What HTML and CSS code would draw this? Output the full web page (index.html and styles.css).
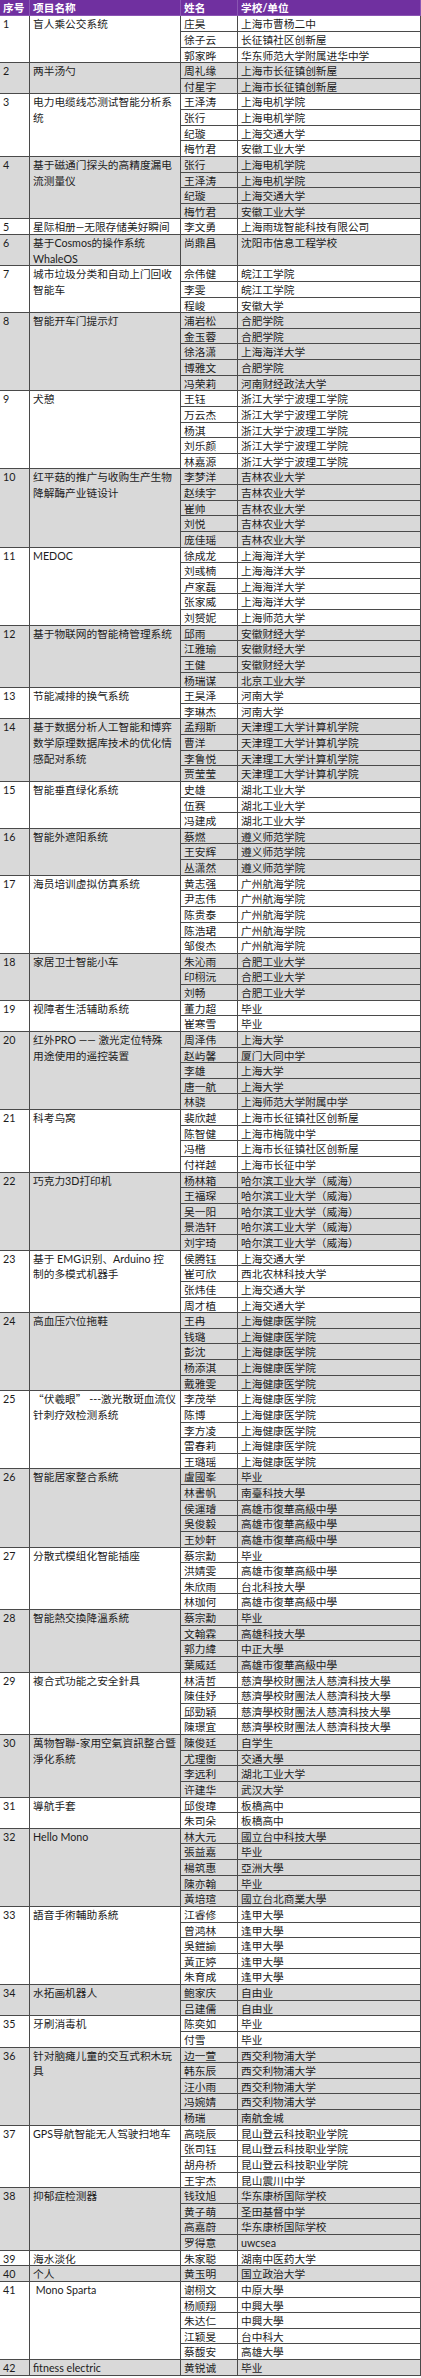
FILE: index.html
```html
<!DOCTYPE html>
<html lang="zh-CN">
<head>
<meta charset="utf-8">
<title>项目名单</title>
<link rel="stylesheet" href="styles.css">
</head>
<body>
<div class="sheet">
  <div class="c h">序号</div><div class="c h">项目名称</div><div class="c h">姓名</div><div class="c h">学校/单位</div>

  <div class="grp">
    <div class="c n s3">1</div><div class="c p s3">盲人乘公交系统</div>
    <div class="c">庄昊</div><div class="c">上海市曹杨二中</div>
    <div class="c">徐子云</div><div class="c">长征镇社区创新屋</div>
    <div class="c">郭家晔</div><div class="c">华东师范大学附属进华中学</div>
  </div>
  <div class="grp g">
    <div class="c n s2">2</div><div class="c p s2">两半汤勺</div>
    <div class="c">周礼缘</div><div class="c">上海市长征镇创新屋</div>
    <div class="c">付星宇</div><div class="c">上海市长征镇创新屋</div>
  </div>
  <div class="grp">
    <div class="c n s4">3</div><div class="c p s4">电力电缆线芯测试智能分析系<br>统</div>
    <div class="c">王泽涛</div><div class="c">上海电机学院</div>
    <div class="c">张行</div><div class="c">上海电机学院</div>
    <div class="c">纪璇</div><div class="c">上海交通大学</div>
    <div class="c">梅竹君</div><div class="c">安徽工业大学</div>
  </div>
  <div class="grp g">
    <div class="c n s4">4</div><div class="c p s4">基于磁通门探头的高精度漏电<br>流测量仪</div>
    <div class="c">张行</div><div class="c">上海电机学院</div>
    <div class="c">王泽涛</div><div class="c">上海电机学院</div>
    <div class="c">纪璇</div><div class="c">上海交通大学</div>
    <div class="c">梅竹君</div><div class="c">安徽工业大学</div>
  </div>
  <div class="grp">
    <div class="c n">5</div><div class="c p">星际相册—无限存储美好瞬间</div>
    <div class="c">李文勇</div><div class="c">上海雨珑智能科技有限公司</div>
  </div>
  <div class="grp g">
    <div class="c n s2">6</div><div class="c p s2">基于Cosmos的操作系统<br>WhaleOS</div>
    <div class="c s2">尚鼎昌</div><div class="c s2">沈阳市信息工程学校</div>
  </div>
  <div class="grp">
    <div class="c n s3">7</div><div class="c p s3">城市垃圾分类和自动上门回收<br>智能车</div>
    <div class="c">佘伟健</div><div class="c">皖江工学院</div>
    <div class="c">李雯</div><div class="c">皖江工学院</div>
    <div class="c">程峻</div><div class="c">安徽大学</div>
  </div>
  <div class="grp g">
    <div class="c n s5">8</div><div class="c p s5">智能开车门提示灯</div>
    <div class="c">浦岩松</div><div class="c">合肥学院</div>
    <div class="c">金玉蓉</div><div class="c">合肥学院</div>
    <div class="c">徐洛潇</div><div class="c">上海海洋大学</div>
    <div class="c">博雅文</div><div class="c">合肥学院</div>
    <div class="c">冯荣莉</div><div class="c">河南财经政法大学</div>
  </div>
  <div class="grp">
    <div class="c n s5">9</div><div class="c p s5">犬憩</div>
    <div class="c">王钰</div><div class="c">浙江大学宁波理工学院</div>
    <div class="c">万云杰</div><div class="c">浙江大学宁波理工学院</div>
    <div class="c">杨淇</div><div class="c">浙江大学宁波理工学院</div>
    <div class="c">刘乐颜</div><div class="c">浙江大学宁波理工学院</div>
    <div class="c">林嘉源</div><div class="c">浙江大学宁波理工学院</div>
  </div>
  <div class="grp g">
    <div class="c n s5">10</div><div class="c p s5">红平菇的推广与收购生产生物<br>降解酶产业链设计</div>
    <div class="c">李梦洋</div><div class="c">吉林农业大学</div>
    <div class="c">赵续宇</div><div class="c">吉林农业大学</div>
    <div class="c">崔帅</div><div class="c">吉林农业大学</div>
    <div class="c">刘悦</div><div class="c">吉林农业大学</div>
    <div class="c">庞佳瑶</div><div class="c">吉林农业大学</div>
  </div>
  <div class="grp">
    <div class="c n s5">11</div><div class="c p s5">MEDOC</div>
    <div class="c">徐成龙</div><div class="c">上海海洋大学</div>
    <div class="c">刘彧楠</div><div class="c">上海海洋大学</div>
    <div class="c">卢家磊</div><div class="c">上海海洋大学</div>
    <div class="c">张家威</div><div class="c">上海海洋大学</div>
    <div class="c">刘赟妮</div><div class="c">上海师范大学</div>
  </div>
  <div class="grp g">
    <div class="c n s4">12</div><div class="c p s4">基于物联网的智能椅管理系统</div>
    <div class="c">邱雨</div><div class="c">安徽财经大学</div>
    <div class="c">江雅瑜</div><div class="c">安徽财经大学</div>
    <div class="c">王健</div><div class="c">安徽财经大学</div>
    <div class="c">杨瑞谋</div><div class="c">北京工业大学</div>
  </div>
  <div class="grp">
    <div class="c n s2">13</div><div class="c p s2">节能减排的换气系统</div>
    <div class="c">王昊泽</div><div class="c">河南大学</div>
    <div class="c">李琳杰</div><div class="c">河南大学</div>
  </div>
  <div class="grp g">
    <div class="c n s4">14</div><div class="c p s4">基于数据分析人工智能和博弈<br>数学原理数据库技术的优化情<br>感配对系统</div>
    <div class="c">孟翔斯</div><div class="c">天津理工大学计算机学院</div>
    <div class="c">曹洋</div><div class="c">天津理工大学计算机学院</div>
    <div class="c">李鲁悦</div><div class="c">天津理工大学计算机学院</div>
    <div class="c">贾莹莹</div><div class="c">天津理工大学计算机学院</div>
  </div>
  <div class="grp">
    <div class="c n s3">15</div><div class="c p s3">智能垂直绿化系统</div>
    <div class="c">史雄</div><div class="c">湖北工业大学</div>
    <div class="c">伍赛</div><div class="c">湖北工业大学</div>
    <div class="c">冯建成</div><div class="c">湖北工业大学</div>
  </div>
  <div class="grp g">
    <div class="c n s3">16</div><div class="c p s3">智能外遮阳系统</div>
    <div class="c">蔡燃</div><div class="c">遵义师范学院</div>
    <div class="c">王安辉</div><div class="c">遵义师范学院</div>
    <div class="c">丛潇然</div><div class="c">遵义师范学院</div>
  </div>
  <div class="grp">
    <div class="c n s5">17</div><div class="c p s5">海员培训虚拟仿真系统</div>
    <div class="c">黄志强</div><div class="c">广州航海学院</div>
    <div class="c">尹志伟</div><div class="c">广州航海学院</div>
    <div class="c">陈贵泰</div><div class="c">广州航海学院</div>
    <div class="c">陈浩珺</div><div class="c">广州航海学院</div>
    <div class="c">邹俊杰</div><div class="c">广州航海学院</div>
  </div>
  <div class="grp g">
    <div class="c n s3">18</div><div class="c p s3">家居卫士智能小车</div>
    <div class="c">朱沁雨</div><div class="c">合肥工业大学</div>
    <div class="c">印栩沅</div><div class="c">合肥工业大学</div>
    <div class="c">刘畅</div><div class="c">合肥工业大学</div>
  </div>
  <div class="grp">
    <div class="c n s2">19</div><div class="c p s2">视障者生活辅助系统</div>
    <div class="c">董力超</div><div class="c">毕业</div>
    <div class="c">崔寒雪</div><div class="c">毕业</div>
  </div>
  <div class="grp g">
    <div class="c n s5">20</div><div class="c p s5">红外PRO —— 激光定位特殊<br>用途使用的遥控装置</div>
    <div class="c">周泽伟</div><div class="c">上海大学</div>
    <div class="c">赵屿馨</div><div class="c">厦门大同中学</div>
    <div class="c">李雄</div><div class="c">上海大学</div>
    <div class="c">唐一航</div><div class="c">上海大学</div>
    <div class="c">林骁</div><div class="c">上海师范大学附属中学</div>
  </div>
  <div class="grp">
    <div class="c n s4">21</div><div class="c p s4">科考鸟窝</div>
    <div class="c">裴欣越</div><div class="c">上海市长征镇社区创新屋</div>
    <div class="c">陈智健</div><div class="c">上海市梅陇中学</div>
    <div class="c">冯楷</div><div class="c">上海市长征镇社区创新屋</div>
    <div class="c">付祥越</div><div class="c">上海市长征中学</div>
  </div>
  <div class="grp g">
    <div class="c n s5">22</div><div class="c p s5">巧克力3D打印机</div>
    <div class="c">杨林箱</div><div class="c">哈尔滨工业大学（威海）</div>
    <div class="c">王福琛</div><div class="c">哈尔滨工业大学（威海）</div>
    <div class="c">吴一阳</div><div class="c">哈尔滨工业大学（威海）</div>
    <div class="c">景浩轩</div><div class="c">哈尔滨工业大学（威海）</div>
    <div class="c">刘宇琦</div><div class="c">哈尔滨工业大学（威海）</div>
  </div>
  <div class="grp">
    <div class="c n s4">23</div><div class="c p s4">基于 EMG识别、Arduino 控<br>制的多模式机器手</div>
    <div class="c">侯腾钰</div><div class="c">上海交通大学</div>
    <div class="c">崔可欣</div><div class="c">西北农林科技大学</div>
    <div class="c">张炜佳</div><div class="c">上海交通大学</div>
    <div class="c">周才植</div><div class="c">上海交通大学</div>
  </div>
  <div class="grp g">
    <div class="c n s5">24</div><div class="c p s5">高血压穴位拖鞋</div>
    <div class="c">王冉</div><div class="c">上海健康医学院</div>
    <div class="c">钱璐</div><div class="c">上海健康医学院</div>
    <div class="c">彭沈</div><div class="c">上海健康医学院</div>
    <div class="c">杨添淇</div><div class="c">上海健康医学院</div>
    <div class="c">戴雅雯</div><div class="c">上海健康医学院</div>
  </div>
  <div class="grp">
    <div class="c n s5">25</div><div class="c p s5"><span class="q">“伏羲眼”</span> ---激光散斑血流仪<br>针刺疗效检测系统</div>
    <div class="c">李茂举</div><div class="c">上海健康医学院</div>
    <div class="c">陈博</div><div class="c">上海健康医学院</div>
    <div class="c">李方凌</div><div class="c">上海健康医学院</div>
    <div class="c">雷春莉</div><div class="c">上海健康医学院</div>
    <div class="c">王璐瑶</div><div class="c">上海健康医学院</div>
  </div>
  <div class="grp g">
    <div class="c n s5">26</div><div class="c p s5">智能居家整合系統</div>
    <div class="c">盧國峯</div><div class="c">毕业</div>
    <div class="c">林書帆</div><div class="c">南臺科技大學</div>
    <div class="c">侯運璿</div><div class="c">高雄市復華高級中學</div>
    <div class="c">吳俊毅</div><div class="c">高雄市復華高級中學</div>
    <div class="c">王妙軒</div><div class="c">高雄市復華高級中學</div>
  </div>
  <div class="grp">
    <div class="c n s4">27</div><div class="c p s4">分散式模组化智能插座</div>
    <div class="c">蔡宗勳</div><div class="c">毕业</div>
    <div class="c">洪婧雯</div><div class="c">高雄市復華高級中學</div>
    <div class="c">朱欣雨</div><div class="c">台北科技大學</div>
    <div class="c">林珈何</div><div class="c">高雄市復華高級中學</div>
  </div>
  <div class="grp g">
    <div class="c n s4">28</div><div class="c p s4">智能熱交換降溫系統</div>
    <div class="c">蔡宗勳</div><div class="c">毕业</div>
    <div class="c">文翰霖</div><div class="c">高雄科技大學</div>
    <div class="c">郭力緯</div><div class="c">中正大學</div>
    <div class="c">葉威廷</div><div class="c">高雄市復華高級中學</div>
  </div>
  <div class="grp">
    <div class="c n s4">29</div><div class="c p s4">複合式功能之安全針具</div>
    <div class="c">林清哲</div><div class="c">慈濟學校財團法人慈濟科技大學</div>
    <div class="c">陳佳妤</div><div class="c">慈濟學校財團法人慈濟科技大學</div>
    <div class="c">邱勁穎</div><div class="c">慈濟學校財團法人慈濟科技大學</div>
    <div class="c">陳璟宜</div><div class="c">慈濟學校財團法人慈濟科技大學</div>
  </div>
  <div class="grp g">
    <div class="c n s4">30</div><div class="c p s4">萬物智聯-家用空氣資訊整合暨<br>淨化系統</div>
    <div class="c">陳俊廷</div><div class="c">自学生</div>
    <div class="c">尤理衡</div><div class="c">交通大學</div>
    <div class="c">李远利</div><div class="c">湖北工业大学</div>
    <div class="c">许建华</div><div class="c">武汉大学</div>
  </div>
  <div class="grp">
    <div class="c n s2">31</div><div class="c p s2">導航手套</div>
    <div class="c">邱俊瑋</div><div class="c">板橋高中</div>
    <div class="c">朱司朵</div><div class="c">板橋高中</div>
  </div>
  <div class="grp g">
    <div class="c n s5">32</div><div class="c p s5">Hello Mono</div>
    <div class="c">林大元</div><div class="c">國立台中科技大學</div>
    <div class="c">張益嘉</div><div class="c">毕业</div>
    <div class="c">楊筑惠</div><div class="c">亞洲大學</div>
    <div class="c">陳亦翰</div><div class="c">毕业</div>
    <div class="c">黃培瑄</div><div class="c">國立台北商業大學</div>
  </div>
  <div class="grp">
    <div class="c n s5">33</div><div class="c p s5">語音手術輔助系統</div>
    <div class="c">江睿修</div><div class="c">逢甲大學</div>
    <div class="c">曾鸿林</div><div class="c">逢甲大學</div>
    <div class="c">吳鎧諭</div><div class="c">逢甲大學</div>
    <div class="c">黃正婷</div><div class="c">逢甲大學</div>
    <div class="c">朱育成</div><div class="c">逢甲大學</div>
  </div>
  <div class="grp g">
    <div class="c n s2">34</div><div class="c p s2">水拓画机器人</div>
    <div class="c">鲍家庆</div><div class="c">自由业</div>
    <div class="c">吕建儒</div><div class="c">自由业</div>
  </div>
  <div class="grp">
    <div class="c n s2">35</div><div class="c p s2">牙刷消毒机</div>
    <div class="c">陈奕如</div><div class="c">毕业</div>
    <div class="c">付雪</div><div class="c">毕业</div>
  </div>
  <div class="grp g">
    <div class="c n s5">36</div><div class="c p s5">针对脑瘫儿童的交互式积木玩<br>具</div>
    <div class="c">边一萱</div><div class="c">西交利物浦大学</div>
    <div class="c">韩东辰</div><div class="c">西交利物浦大学</div>
    <div class="c">汪小雨</div><div class="c">西交利物浦大学</div>
    <div class="c">冯婉婧</div><div class="c">西交利物浦大学</div>
    <div class="c">杨瑞</div><div class="c">南航金城</div>
  </div>
  <div class="grp">
    <div class="c n s4">37</div><div class="c p s4">GPS导航智能无人驾驶扫地车</div>
    <div class="c">高晓辰</div><div class="c">昆山登云科技职业学院</div>
    <div class="c">张司钰</div><div class="c">昆山登云科技职业学院</div>
    <div class="c">胡舟桥</div><div class="c">昆山登云科技职业学院</div>
    <div class="c">王宇杰</div><div class="c">昆山震川中学</div>
  </div>
  <div class="grp g">
    <div class="c n s4">38</div><div class="c p s4">抑郁症检测器</div>
    <div class="c">钱玟旭</div><div class="c">华东康桥国际学校</div>
    <div class="c">黄子萌</div><div class="c">圣田基督中学</div>
    <div class="c">高嘉蔚</div><div class="c">华东康桥国际学校</div>
    <div class="c">罗得意</div><div class="c">uwcsea</div>
  </div>
  <div class="grp">
    <div class="c n">39</div><div class="c p">海水淡化</div>
    <div class="c">朱家聪</div><div class="c">湖南中医药大学</div>
  </div>
  <div class="grp g">
    <div class="c n">40</div><div class="c p">个人</div>
    <div class="c">黄玉明</div><div class="c">国立政治大学</div>
  </div>
  <div class="grp">
    <div class="c n s5">41</div><div class="c p s5">&nbsp;Mono Sparta</div>
    <div class="c">谢栩文</div><div class="c">中原大學</div>
    <div class="c">杨顺翔</div><div class="c">中興大學</div>
    <div class="c">朱达仁</div><div class="c">中興大學</div>
    <div class="c">江颖旻</div><div class="c">台中科大</div>
    <div class="c">蔡馥安</div><div class="c">高雄大學</div>
  </div>
  <div class="grp g">
    <div class="c n">42</div><div class="c p">fitness electric</div>
    <div class="c">黄锐诚</div><div class="c">毕业</div>
  </div>
</div>
</body>
</html>
```

FILE: styles.css
```css
html, body {
  margin: 0;
  padding: 0;
  background: #ffffff;
}

.sheet {
  display: grid;
  grid-template-columns: 30px 151px 57px 183px;
  grid-template-rows: 16.3px;
  grid-auto-rows: 15.64px;
  width: 421px;
  font-family: Lato, "Noto Sans CJK SC", sans-serif;
  font-size: 10.7px;
  color: #1c1c1c;
}

.grp {
  display: contents;
}

.c {
  box-sizing: border-box;
  border-right: 1px solid #4a4a4a;
  border-bottom: 1px solid #4a4a4a;
  padding: 0 0 0 3px;
  line-height: 15.64px;
  white-space: nowrap;
  overflow: hidden;
  background: #ffffff;
}

.g > .c {
  background: #d9d9d9;
}

.c.p {
  white-space: normal;
}

.q {
  font-family: "Noto Sans CJK SC", sans-serif;
}

.c.h {
  background: #7030a0;
  color: #ffffff;
  font-weight: bold;
  line-height: 16.3px;
  border-color: #8a55b3;
}

.s2 { grid-row: span 2; }
.s3 { grid-row: span 3; }
.s4 { grid-row: span 4; }
.s5 { grid-row: span 5; }
```
